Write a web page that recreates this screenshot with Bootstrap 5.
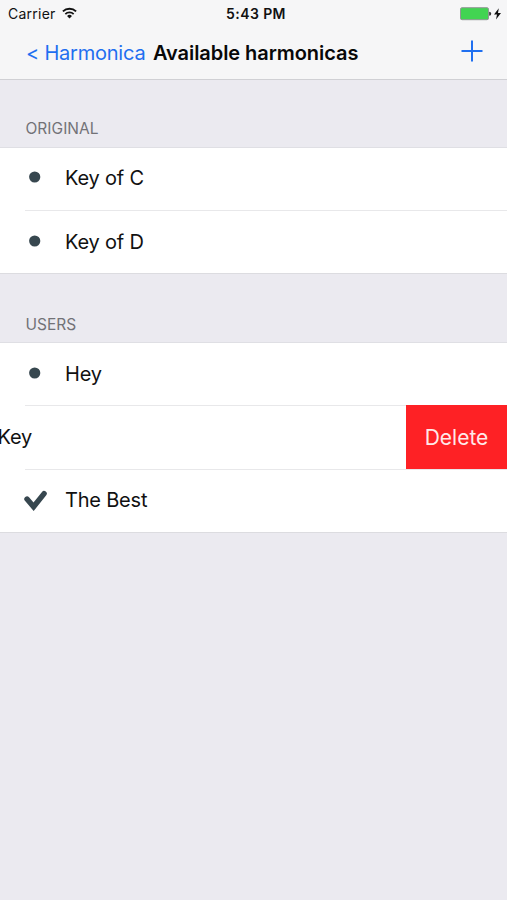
<!DOCTYPE html>
<html lang="en">
<head>
<meta charset="utf-8">
<meta name="viewport" content="width=device-width, initial-scale=1">
<title>Available harmonicas</title>
<link href="https://cdn.jsdelivr.net/npm/bootstrap@5.3.0/dist/css/bootstrap.min.css" rel="stylesheet">
<style>
body{font-family:Inter,"Liberation Sans",sans-serif;background:#ebeaf0;color:#111;min-height:900px;overflow:hidden;font-size:20px;line-height:24px}
.top-area{background:#f6f6f7;height:80px;border-bottom:1px solid #d0d0d4}
.status-bar{height:27px;font-size:14px;line-height:27px;padding:0 4px 0 8px}
.status-side{width:120px}
.carrier-name{letter-spacing:.25px;margin-right:5px}
.clock-text{font-size:14px;letter-spacing:.4px;margin-left:1px}
.title-bar{height:51px;padding:0 24px 0 26px}
.back-link{color:#1f6ff0;letter-spacing:-.22px}
.screen-title{margin-left:7.5px;letter-spacing:-.06px;color:#080808}
.add-link{padding-bottom:3px}
.section-label{height:67px;padding:0 25px 9px 25.5px;font-size:15.5px;line-height:18px;color:#727277;letter-spacing:.02px}
.section-label.second{height:68px;padding-bottom:8px}
.harp-list{background:#fff;border-bottom:1px solid #dcdce0}
.harp-row{height:63.3px;padding-left:25px;letter-spacing:-.2px}
.harp-list.pair .harp-row{height:63px}
.harp-list.pair .harp-row:first-child{padding-bottom:1px}
.harp-row::before{content:"";position:absolute;left:0;right:0;top:0;height:1px;background:#dfdfe4}
.harp-row+.harp-row::before{left:25px;background:#e8e8ea}
.mark-cell{width:40px}
.delete-btn{width:101px;background:#fe2125;color:#ffe9e9;font-size:21px;letter-spacing:0;z-index:1}
.delete-btn span{display:block;padding-top:2px}
.swiped{padding-left:0}
.swiped-name{margin-left:-2.5px}
</style>
<script src="https://cdn.jsdelivr.net/npm/bootstrap@5.3.0/dist/js/bootstrap.bundle.min.js"></script>
</head>
<body>
<header class="top-area">
  <div class="status-bar d-flex justify-content-between align-items-center">
    <div class="status-side d-flex align-items-center">
      <span class="carrier-name">Carrier</span>
      <svg width="17" height="16" viewBox="0 0 18 16" fill="none" stroke="#111" stroke-width="1.9"><path d="M2 5.3a10 10 0 0 1 14 0M4.6 8.1a6.2 6.2 0 0 1 8.8 0"/><path d="M6.4 10.2a3.7 3.7 0 0 1 5.2 0L9 12.8z" fill="#111" stroke="none"/></svg>
    </div>
    <span class="clock-text fw-semibold">5:43 PM</span>
    <div class="status-side d-flex justify-content-end align-items-center">
      <svg width="43" height="14" viewBox="0 0 43 14"><rect x=".5" y=".7" width="28" height="12" rx="1.5" fill="#42d452" stroke="#929795"/><path d="M29.2 4.8a2 2 0 0 1 0 4z" fill="#333"/><path d="M38.8 1.2 34 7.5h3L36 12.4 41 6h-3z" fill="#111"/></svg>
    </div>
  </div>
  <nav class="title-bar d-flex align-items-center">
    <a class="back-link text-decoration-none" href="#">&lt; Harmonica</a>
    <h1 class="screen-title fs-5 fw-semibold mb-0">Available harmonicas</h1>
    <a class="add-link ms-auto d-flex" href="#" aria-label="Add"><svg width="22" height="22" viewBox="0 0 22 22" stroke="#1f6ff0" stroke-width="2"><path d="M.5 11h21M11 .5v21"/></svg></a>
  </nav>
</header>
<main>
  <div class="section-label d-flex align-items-end">ORIGINAL</div>
  <div class="harp-list pair">
    <div class="harp-row position-relative d-flex align-items-center"><span class="mark-cell d-flex"><svg width="22" height="22" viewBox="0 0 22 22"><circle cx="9.7" cy="10" r="5.6" fill="#37474f"/></svg></span><span>Key of C</span></div>
    <div class="harp-row position-relative d-flex align-items-center"><span class="mark-cell d-flex"><svg width="22" height="22" viewBox="0 0 22 22"><circle cx="9.7" cy="10" r="5.6" fill="#37474f"/></svg></span><span>Key of D</span></div>
  </div>
  <div class="section-label second d-flex align-items-end">USERS</div>
  <div class="harp-list">
    <div class="harp-row position-relative d-flex align-items-center"><span class="mark-cell d-flex"><svg width="22" height="22" viewBox="0 0 22 22"><circle cx="9.7" cy="10" r="5.6" fill="#37474f"/></svg></span><span>Hey</span></div>
    <div class="harp-row swiped position-relative d-flex align-items-center overflow-hidden"><span class="swiped-name">Key</span><button class="delete-btn btn rounded-0 border-0 ms-auto h-100 p-0"><span>Delete</span></button></div>
    <div class="harp-row position-relative d-flex align-items-center"><span class="mark-cell d-flex"><svg class="overflow-visible" width="23" height="22" viewBox="0 0 23 22" fill="none" stroke="#37474f" stroke-width="5.4" stroke-linecap="round"><path d="M2 10 8.6 17.8 19.1 4.6"/></svg></span><span>The Best</span></div>
  </div>
</main>
</body>
</html>
